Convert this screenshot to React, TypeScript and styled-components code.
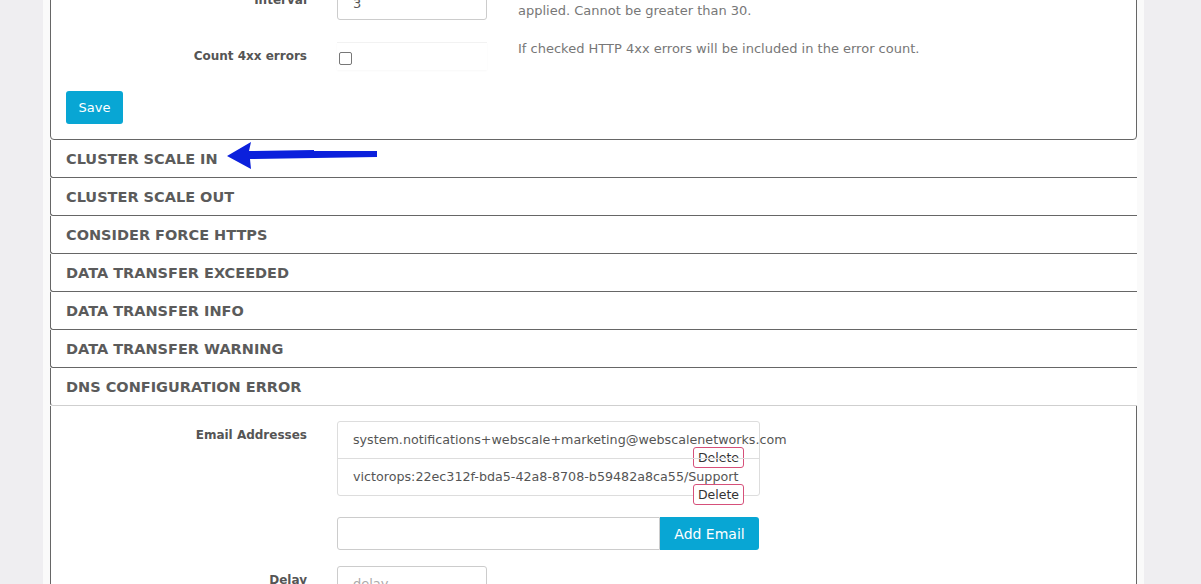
import * as React from 'react';
import styled, { createGlobalStyle } from 'styled-components';

const font = `'DejaVu Sans', 'Liberation Sans', sans-serif`;

const GlobalStyle = createGlobalStyle`
  html, body {
    margin: 0;
    padding: 0;
  }
  body {
    background: #efeef1;
    font-family: ${font};
    overflow: hidden;
  }
`;

const Column = styled.div`
  margin: -30px 0 0 43px;
  width: 1101px;
  min-height: 700px;
  padding: 0 7px;
  box-sizing: border-box;
  background: #fafafa;
`;

const Panel = styled.div`
  background: #fff;
  border: 1px solid #666;
  border-radius: 4px;
  padding: 15px;
`;

const Row = styled.div<{ $gap?: number }>`
  display: flex;
  align-items: flex-start;
  margin-bottom: ${p => (p.$gap ?? 22)}px;
`;

const Label = styled.label`
  width: 241px;
  flex: 0 0 auto;
  padding-top: 5px;
  margin-right: 30px;
  text-align: right;
  font-size: 12px;
  line-height: 18px;
  font-weight: bold;
  color: #555;
`;

const Field = styled.div<{ $width?: number }>`
  width: ${p => p.$width ?? 150}px;
  flex: 0 0 auto;
  position: relative;
`;

const Help = styled.div`
  margin: -2px 0 0 31px;
  font-size: 13px;
  line-height: 18px;
  color: #777;
`;

const TextInput = styled.input<{ $group?: boolean }>`
  box-sizing: border-box;
  width: 100%;
  height: 34px;
  padding: 0 15px;
  border: 1px solid #ccc;
  border-radius: ${p => (p.$group ? '3px 0 0 3px' : '3px')};
  font-family: ${font};
  font-size: 13px;
  color: #555;
  background: #fff;
  outline: none;

  &::placeholder {
    color: #aaa;
  }
`;

const CheckWrap = styled.div`
  height: 28px;
  border-top: 1px solid #f2f2f2;
  box-shadow: 0 1px 2px rgba(0, 0, 0, 0.03);
  box-sizing: border-box;
  padding: 9px 0 0 2px;
`;

const Check = styled.span`
  display: block;
  width: 11px;
  height: 11px;
  border: 1px solid #777;
  border-radius: 2px;
  background: #fff;
`;

const PrimaryButton = styled.button`
  width: 57px;
  height: 33px;
  padding: 0;
  border: none;
  border-radius: 3px;
  background: #08a6d4;
  color: #fff;
  font-family: ${font};
  font-size: 13px;
  cursor: pointer;
`;

const AddButton = styled(PrimaryButton)`
  width: 99px;
  font-size: 14px;
  border-radius: 0 3px 3px 0;
  flex: 0 0 auto;
`;

const InputGroup = styled.div`
  display: flex;
  width: 422px;

  & > input {
    height: 33px;
  }
`;

const AccordionHeader = styled.div<{ $open?: boolean }>`
  position: relative;
  height: 37px;
  display: flex;
  align-items: center;
  padding-left: 15px;
  background: #fff;
  border-left: 1px solid #666;
  border-bottom: 1px solid ${p => (p.$open ? '#cfcfcf' : '#666')};
  border-bottom-left-radius: 3px;
  font-size: 14.5px;
  font-weight: bold;
  color: #5b5b5b;
  text-transform: uppercase;
`;

const PanelBody = styled.div`
  background: #fff;
  border-left: 1px solid #666;
  border-right: 1px solid #666;
  padding: 15px;
  min-height: 300px;
`;

const EmailList = styled.div`
  border: 1px solid #ddd;
  border-radius: 3px;
`;

const EmailItem = styled.div<{ $divider?: boolean }>`
  position: relative;
  height: 36px;
  line-height: 36px;
  padding-left: 15px;
  white-space: nowrap;
  font-size: 12.7px;
  color: #555;
  border-top: ${p => (p.$divider ? '1px solid #ddd' : 'none')};
`;

const DeleteButton = styled.button`
  position: absolute;
  right: 15px;
  top: 25px;
  width: 51px;
  height: 21px;
  padding: 0;
  border: 1px solid #d6507a;
  border-radius: 3px;
  background: #fff;
  font-family: ${font};
  font-size: 12.5px;
  line-height: 19px;
  color: #333;
`;

const Arrow = styled.svg`
  position: absolute;
  left: 175px;
  top: 1px;
`;

const headers = [
  'Cluster Scale In',
  'Cluster Scale Out',
  'Consider Force HTTPS',
  'Data Transfer Exceeded',
  'Data Transfer Info',
  'Data Transfer Warning',
];

const emails = [
  'system.notifications+webscale+marketing@webscalenetworks.com',
  'victorops:22ec312f-bda5-42a8-8708-b59482a8ca55/Support',
];

export default function App() {
  return (
    <>
      <GlobalStyle />
      <Column>
        <Panel>
          <Row>
            <Label>Interval</Label>
            <Field>
              <TextInput defaultValue="3" />
            </Field>
            <Help>
              Interval in minutes before trigger is
              <br />
              applied. Cannot be greater than 30.
            </Help>
          </Row>
          <Row $gap={21}>
            <Label>Count 4xx errors</Label>
            <Field>
              <CheckWrap>
                <Check />
              </CheckWrap>
            </Field>
            <Help>If checked HTTP 4xx errors will be included in the error count.</Help>
          </Row>
          <PrimaryButton>Save</PrimaryButton>
        </Panel>

        {headers.map((h, i) => (
          <AccordionHeader key={h}>
            {h}
            {i === 0 && (
              <Arrow width="152" height="30" viewBox="0 0 152 30">
                <polygon
                  points="1,15 25,1 23,10 88,9 88,10 151,10 151,16 24,18 25,28"
                  fill="#0b20dc"
                />
              </Arrow>
            )}
          </AccordionHeader>
        ))}
        <AccordionHeader $open>DNS Configuration Error</AccordionHeader>

        <PanelBody>
          <Row $gap={21}>
            <Label>Email Addresses</Label>
            <Field $width={423}>
              <EmailList>
                {emails.map((e, i) => (
                  <EmailItem key={e} $divider={i > 0}>
                    {e}
                    <DeleteButton>Delete</DeleteButton>
                  </EmailItem>
                ))}
              </EmailList>
            </Field>
          </Row>
          <Row $gap={16}>
            <Label />
            <InputGroup>
              <TextInput $group />
              <AddButton>Add Email</AddButton>
            </InputGroup>
          </Row>
          <Row>
            <Label>Delay</Label>
            <Field>
              <TextInput placeholder="delay" />
            </Field>
          </Row>
        </PanelBody>
      </Column>
    </>
  );
}
